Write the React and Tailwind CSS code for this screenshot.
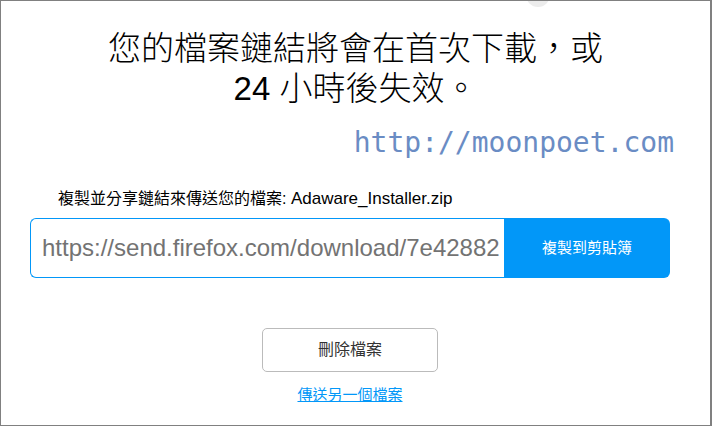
import React from 'react';

const cjk = { fontFamily: '"Liberation Sans", "Noto Sans CJK TC", sans-serif' };

const App = () => {
  return (
    <div
      className="relative w-[712px] h-[426px] overflow-hidden bg-white border border-[#808080] border-r-2 text-black"
      style={cjk}
    >
      <div className="absolute left-[525px] -top-[18px] w-6 h-6 rounded-full bg-[#ececec]" />
      <div className="flex flex-col items-center pt-[28px]">
        <h1 className="text-[33px] leading-[40px] font-light text-center">
          您的檔案鏈結將會在首次下載，或
          <br />
          24 小時後失效。
        </h1>
      </div>
      <div className="flex justify-end pr-[36px] mt-[18px]">
        <span
          className="text-[28px] leading-[32px] text-[#6a8cc4]"
          style={{ fontFamily: '"DejaVu Sans Mono", monospace' }}
        >
          http://moonpoet.com
        </span>
      </div>
      <div className="pl-[57px] mt-[30px] text-[16px] leading-[20px]">
        複製並分享鏈結來傳送您的檔案: <span className="text-[17px]">Adaware_Installer.zip</span>
      </div>
      <div className="flex mx-[29px] mt-[9px] h-[60px] w-[640px]">
        <div className="flex-1 flex items-center overflow-hidden whitespace-nowrap border border-r-0 border-[#0297f8] rounded-l-md pl-[11px] text-[24px] text-[#737373]">
          https://send.firefox.com/download/7e42882
        </div>
        <button className="w-[166px] bg-[#0297f8] text-white text-[15px] rounded-r-md">
          複製到剪貼簿
        </button>
      </div>
      <div className="flex flex-col items-center mt-[50px] pr-[11px]">
        <button className="w-[176px] h-[44px] border border-[#bbbbbb] rounded-[5px] text-[16px] text-[#333]">
          刪除檔案
        </button>
        <a href="#" className="mt-[13px] text-[15px] leading-[20px] text-[#0297f8] underline">
          傳送另一個檔案
        </a>
      </div>
    </div>
  );
};

export default App;
